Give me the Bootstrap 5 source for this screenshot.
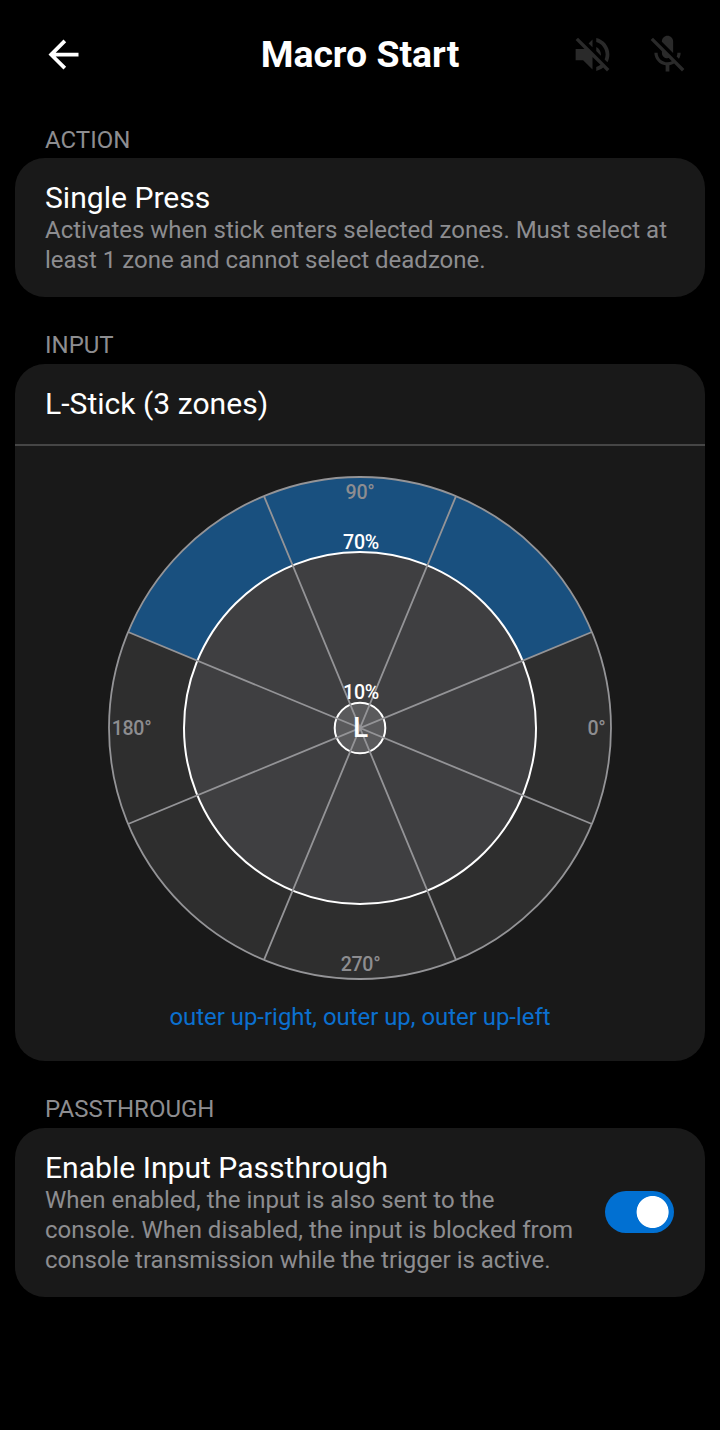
<!DOCTYPE html>
<html lang="en" data-bs-theme="dark">
<head>
<meta charset="utf-8">
<meta name="viewport" content="width=device-width, initial-scale=1">
<title>Macro Start</title>
<link href="https://cdn.jsdelivr.net/npm/bootstrap@5.3.0/dist/css/bootstrap.min.css" rel="stylesheet">
<style>
  body { background: #000; color: #fff; font-family: Roboto, sans-serif; min-height: 1430px; }
  .topbar { height: 108px; padding: 0 30px 0 41px; }
  .topbar svg { width: 45px; height: 45px; display: block; }
  .topbar h1 { font-size: 37.4px; font-weight: 700; line-height: 45px; padding-top: 1px; }
  .dim-icon { color: #2a2a2a; }
  .side-start { width: 109px; }
  .side-end { width: 120px; }
  .section-label { font-size: 24px; line-height: 30px; color: #8d8d90; padding: 0 0 0 30px; margin-bottom: 3px; font-weight: 400; }
  .panel + .section-label { margin-top: -1px; margin-bottom: 4px; }
  .panel { background: #191919; border: 0; border-radius: 30px; color: #fff; }
  .item-title { font-size: 30.1px; line-height: 35px; font-weight: 400; }
  .item-text { font-size: 24px; line-height: 30px; color: #8d8d90; }
  .panel-head { height: 82px; border-bottom: 2px solid #464646; padding: 0 30px 2px; }
  .dial text { font-size: 19.6px; letter-spacing: -.3px; font-weight: 500; text-anchor: middle; fill: #8d8d90; }
  .dial .ring-label { fill: #fff; }
  .dial .stick-label { fill: #fff; font-size: 28px; }
  .zones { font-size: 23.9px; line-height: 30px; color: #0b70cf; }
  .form-switch .form-check-input.toggle {
    width: 69px; height: 42px; margin: 0 0 1px; float: none; border: 0; border-radius: 21px; background-color: #0170d2;
    background-image: radial-gradient(circle at 47.6px 21px, #fff 15.6px, transparent 16.4px);
    background-position: 0 0; background-size: 100% 100%;
  }
</style>
</head>
<body>
<header class="topbar d-flex align-items-center justify-content-between">
  <div class="side-start">
    <svg viewBox="0 0 24 24" fill="currentColor"><path d="M20 11H7.83l5.59-5.59L12 4l-8 8 8 8 1.41-1.41L7.83 13H20z"/></svg>
  </div>
  <h1 class="m-0">Macro Start</h1>
  <div class="side-end dim-icon d-flex justify-content-between">
    <svg viewBox="0 0 24 24" fill="currentColor"><path d="M16.5 12c0-1.77-1.02-3.29-2.5-4.03v2.21l2.45 2.45c.03-.2.05-.41.05-.63zm2.5 0c0 .94-.2 1.82-.54 2.64l1.51 1.51C20.63 14.91 21 13.5 21 12c0-4.28-2.99-7.86-7-8.77v2.06c2.89.86 5 3.54 5 6.71zM4.27 3L3 4.27 7.73 9H3v6h4l5 5v-6.73l4.25 4.25c-.67.52-1.42.93-2.25 1.18v2.06c1.38-.31 2.63-.95 3.69-1.81L19.73 21 21 19.73l-9-9L4.27 3zM12 4L9.91 6.09 12 8.18V4z"/></svg>
    <svg viewBox="0 0 24 24" fill="currentColor"><path d="M19 11h-1.7c0 .74-.16 1.43-.43 2.05l1.23 1.23c.56-.98.9-2.09.9-3.28zm-4.02.17c0-.06.02-.11.02-.17V5c0-1.66-1.34-3-3-3S9 3.34 9 5v.18l5.98 5.99zM4.27 3L3 4.27l6.01 6.01V11c0 1.66 1.33 3 2.99 3 .22 0 .44-.03.65-.08l1.66 1.66c-.71.33-1.5.52-2.31.52-2.76 0-5.3-2.1-5.3-5.1H5c0 3.41 2.72 6.23 6 6.72V21h2v-3.28c.91-.13 1.77-.45 2.54-.9L19.73 21 21 19.73 4.27 3z"/></svg>
  </div>
</header>

<main style="padding: 17px 15px 0">
  <h2 class="section-label">ACTION</h2>
  <section class="card panel" style="height: 139px; padding: 22px 30px 0; margin-bottom: 34px">
    <div class="item-title">Single Press</div>
    <div class="item-text text-nowrap">Activates when stick enters selected zones. Must select at<br>least 1 zone and cannot select deadzone.</div>
  </section>

  <h2 class="section-label">INPUT</h2>
  <section class="card panel" style="height: 697px; margin-bottom: 34px">
    <div class="panel-head d-flex align-items-center"><div class="item-title">L-Stick (3 zones)</div></div>
    <svg class="dial d-block mx-auto" style="margin-top: 27px" width="510" height="510" viewBox="-255 -255 510 510">
      <circle r="251" fill="#2e2e2e"/>
      <path fill="#19507f" d="M-231.9-96A251 251 0 0 1 231.9-96L0 0z"/>
      <circle r="176" fill="#3f3f41" stroke="#fff" stroke-width="2"/>
      <circle r="25.3" fill="#5a5a5c" stroke="#fff" stroke-width="2"/>
      <g stroke="#949497" stroke-width="1.8" fill="none">
        <path d="M-231.9-96L231.9 96M-231.9 96L231.9-96M-96-231.9L96 231.9M96-231.9L-96 231.9"/>
        <circle r="251"/>
      </g>
      <text x="0" y="-229">90°</text>
      <text x="0.5" y="243">270°</text>
      <text x="-228.5" y="7">180°</text>
      <text x="236.5" y="7">0°</text>
      <text class="ring-label" x="1" y="-179">70%</text>
      <text class="ring-label" x="1" y="-29">10%</text>
      <text class="stick-label" x="0.5" y="9">L</text>
    </svg>
    <div class="zones text-center" style="margin-top: 19px">outer up-right, outer up, outer up-left</div>
  </section>

  <h2 class="section-label">PASSTHROUGH</h2>
  <section class="card panel flex-row align-items-center justify-content-between" style="height: 169px; padding: 0 31px 0 30px">
    <div>
      <div class="item-title">Enable Input Passthrough</div>
      <div class="item-text text-nowrap">When enabled, the input is also sent to the<br>console. When disabled, the input is blocked from<br>console transmission while the trigger is active.</div>
    </div>
    <div class="form-check form-switch p-0 m-0 d-flex">
      <input class="form-check-input toggle" type="checkbox" role="switch" aria-label="Enable Input Passthrough" checked>
    </div>
  </section>
</main>
<script src="https://cdn.jsdelivr.net/npm/bootstrap@5.3.0/dist/js/bootstrap.bundle.min.js"></script>
</body>
</html>
